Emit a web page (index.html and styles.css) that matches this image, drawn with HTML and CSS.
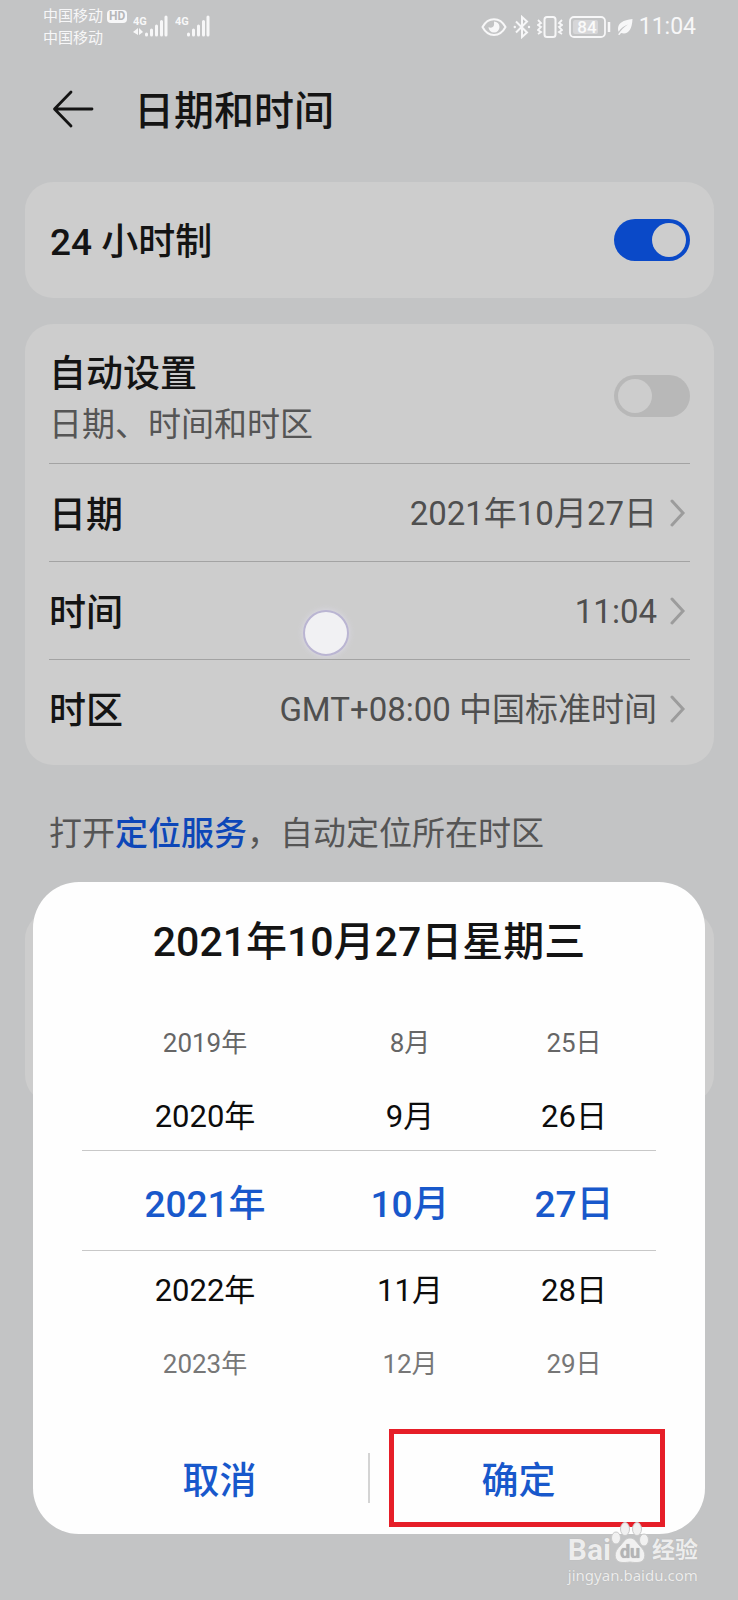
FILE: index.html
```html
<!DOCTYPE html>
<html lang="zh-CN">
<head>
<meta charset="utf-8">
<meta name="viewport" content="width=device-width, initial-scale=1">
<title>日期和时间</title>
<link rel="stylesheet" href="styles.css">
</head>
<body>
<div class="screen">
  <div class="status">
    <div class="status-left">
      <div class="carriers">
        <div class="carrier">中国移动 <span class="hd">HD</span></div>
        <div class="carrier">中国移动</div>
      </div>
      <svg class="signal" width="36" height="24" viewBox="0 0 36 24" aria-label="4G">
        <text x="0" y="11" class="net">4G</text>
        <path d="M0 18l5-4v7zM6 14l4 4-4 3z" fill="currentColor"/>
        <path d="M13.500 21v-1M18.500 21v-5M23.500 21v-9M28.500 21V7.500M33 21V3" class="bars"/>
      </svg>
      <svg class="signal" width="36" height="24" viewBox="0 0 36 24" aria-label="4G">
        <text x="0" y="11" class="net">4G</text>
        <path d="M13.500 21v-1M18.500 21v-5M23.500 21v-9M28.500 21V7.500M33 21V3" class="bars"/>
      </svg>
    </div>
    <div class="status-right">
      <svg width="26" height="24" viewBox="0 0 26 24" fill="none" stroke="currentColor" stroke-width="2">
        <path d="M1.500 12C7 1.500 19 1.500 24.500 12 19 22.500 7 22.500 1.500 12z"/>
        <path d="M13 6.500a5.500 5.500 0 1 1-5.500 5.500c2 1.500 5 .5 5.500-2 .2-1.500 0-2.500 0-3.500z" fill="currentColor" stroke="none"/>
      </svg>
      <svg width="18" height="24" viewBox="0 0 18 24" fill="none" stroke="currentColor" stroke-width="2">
        <path d="M3 6.500l11 11L9 22V2l5 4.500-11 11"/>
        <circle cx="1.800" cy="12" r="1.200" fill="currentColor" stroke="none"/>
        <circle cx="16" cy="12" r="1.200" fill="currentColor" stroke="none"/>
      </svg>
      <svg width="26" height="24" viewBox="0 0 26 24" fill="none" stroke="currentColor" stroke-width="2">
        <rect x="7.500" y="2" width="11" height="20" rx="2.500"/>
        <path d="M1 5l3 3-3 2 3 2-3 3 3 2-3 2M25 5l-3 3 3 2-3 2 3 3-3 2 3 2" stroke-width="1.800"/>
      </svg>
      <svg width="42" height="24" viewBox="0 0 42 24" aria-label="84%">
        <rect x="1" y="2" width="35" height="20" rx="4" fill="none" stroke="currentColor" stroke-width="1.800"/>
        <rect x="4" y="5" width="25" height="14" rx="2" fill="#d6d6d8"/>
        <path d="M40 7v10" stroke="currentColor" stroke-width="2.500"/>
        <text x="18" y="18" text-anchor="middle" class="level">84</text>
      </svg>
      <svg width="16" height="24" viewBox="0 0 16 24">
        <path d="M15.500 4C6 5 1 8 1 14c0 1 .3 2 .6 2.800C4 13 7 11 11 9.500 7 12 4 15 1 19.500l1.500.5 1.500-2c7 2 11-3 11.500-14z" fill="currentColor"/>
      </svg>
      <time class="clock">11:04</time>
    </div>
  </div>

  <header class="header">
    <button class="back" type="button" aria-label="返回">
      <svg width="44" height="40" viewBox="0 0 44 40" fill="none" stroke="currentColor" stroke-width="2.800" stroke-linecap="round" stroke-linejoin="round">
        <path d="M40 20H3M19 3L2.500 20 19 37"/>
      </svg>
    </button>
    <h1 class="title">日期和时间</h1>
  </header>

  <main class="content">
    <section class="card card-single">
      <label class="label" for="h24">24 小时制</label>
      <input class="switch" id="h24" type="checkbox" checked>
    </section>

    <section class="card card-list">
      <div class="row row-tall">
        <label for="auto">
          <span class="label">自动设置</span>
          <span class="hint">日期、时间和时区</span>
        </label>
        <input class="switch" id="auto" type="checkbox">
      </div>
      <button class="row" type="button">
        <span class="label">日期</span>
        <span class="value">2021年10月27日</span>
        <svg class="chevron" viewBox="0 0 16 28"><path d="M2 2l11 12L2 26"/></svg>
      </button>
      <button class="row" type="button">
        <span class="label">时间</span>
        <span class="value">11:04</span>
        <svg class="chevron" viewBox="0 0 16 28"><path d="M2 2l11 12L2 26"/></svg>
        <span class="touch"></span>
      </button>
      <button class="row" type="button">
        <span class="label">时区</span>
        <span class="value">GMT+08:00 中国标准时间</span>
        <svg class="chevron" viewBox="0 0 16 28"><path d="M2 2l11 12L2 26"/></svg>
      </button>
    </section>

    <p class="note">打开<a href="#location">定位服务</a>，自动定位所在时区</p>
    <section class="card card-empty"></section>
  </main>

  <div class="sheet" role="dialog" aria-labelledby="sheet-title">
    <h2 class="sheet-title" id="sheet-title">2021年10月27日星期三</h2>
    <div class="picker">
      <div class="picker-row far top"><span>2019年</span><span>8月</span><span>25日</span></div>
      <div class="picker-row near"><span>2020年</span><span>9月</span><span>26日</span></div>
      <div class="picker-row current"><span>2021年</span><span>10月</span><span>27日</span></div>
      <div class="picker-row near"><span>2022年</span><span>11月</span><span>28日</span></div>
      <div class="picker-row far bottom"><span>2023年</span><span>12月</span><span>29日</span></div>
    </div>
    <div class="actions">
      <button class="action" type="button">取消</button>
      <span class="separator"></span>
      <button class="action" type="button">确定<span class="highlight"></span></button>
    </div>
  </div>

  <div class="watermark">
    <div class="brand">
      <span class="brand-latin">Bai</span>
      <svg class="paw" width="38" height="44" viewBox="0 0 38 44">
        <g fill="#f1f1f1" stroke="#c9c9c9" stroke-width="1">
          <ellipse cx="5" cy="17" rx="4.500" ry="6"/>
          <ellipse cx="14" cy="8" rx="4.500" ry="6.500"/>
          <ellipse cx="26" cy="8" rx="4.500" ry="6.500"/>
          <ellipse cx="33" cy="19" rx="4.500" ry="6"/>
          <path d="M19 17c-5 0-7 5-10 8-4 4-6 8-4 13 2 4 7 4 14 3 7 1 12 1 14-3 2-5 0-9-4-13-3-3-5-8-10-8z"/>
        </g>
        <text x="19" y="37" text-anchor="middle" class="paw-text">du</text>
      </svg>
      <span class="brand-cn">经验</span>
    </div>
    <div class="site">jingyan.baidu.com</div>
  </div>
</div>
</body>
</html>
```
FILE: styles.css
```css
* {
  box-sizing: border-box;
}

body {
  margin: 0;
  background: #c3c4c5;
  color: #141414;
  font-family: Roboto, "Noto Sans CJK SC", sans-serif;
}

button {
  padding: 0;
  border: 0;
  background: none;
  color: inherit;
  font: inherit;
  text-align: left;
}

.screen {
  position: relative;
  min-height: 100vh;
  overflow: hidden;
}

.status {
  display: flex;
  justify-content: space-between;
  padding: 5px 42px 0 43px;
  color: #f7f7f8;
}

.status-left,
.status-right,
.carrier {
  display: flex;
  align-items: center;
}

.status-left {
  gap: 6px;
}

.status-right {
  gap: 6px;
  height: 44px;
}

.carrier {
  gap: 4px;
  height: 22px;
  font-size: 15px;
  line-height: 22px;
}

.hd {
  padding: 0 2px;
  border-radius: 4px;
  background: #f7f7f8;
  color: #b5b6b8;
  font-size: 12px;
  font-weight: 700;
  line-height: 13px;
}

.signal {
  margin-bottom: 2px;
}

.net {
  fill: currentColor;
  font-size: 11px;
  font-weight: 700;
}

.bars {
  fill: none;
  stroke: currentColor;
  stroke-width: 3;
  stroke-linecap: round;
}

.level {
  fill: #fafafa;
  font-size: 17px;
  font-weight: 500;
}

.clock {
  font-size: 23px;
  line-height: 44px;
}

.header {
  display: flex;
  align-items: center;
  gap: 38px;
  height: 120px;
  padding: 0 52px;
}

.back {
  display: flex;
}

.title {
  margin: 0;
  padding-top: 6px;
  font-size: 40px;
  font-weight: 500;
  line-height: 60px;
}

.content {
  padding: 13px 24px 0 25px;
}

.card {
  border-radius: 28px;
  background: #cdcdcd;
}

.card-single {
  display: flex;
  align-items: center;
  justify-content: space-between;
  height: 116px;
  margin-bottom: 26px;
  padding: 0 24px 0 25px;
}

.card-list {
  padding: 0 24px 8px;
}

.card-empty {
  height: 192px;
}

.label {
  display: block;
  padding-top: 6px;
  font-size: 37px;
  font-weight: 500;
  line-height: 52px;
}

.hint {
  display: block;
  color: #555;
  font-size: 33px;
  line-height: 48px;
}

.row {
  position: relative;
  display: flex;
  align-items: center;
  width: 100%;
  height: 98px;
  border-top: 1px solid #a3a3a3;
}

.row-tall {
  justify-content: space-between;
  height: 139px;
  padding-top: 4px;
  border-top: 0;
}

.value {
  margin-left: auto;
  padding-top: 2px;
  color: #4f4f4f;
  font-size: 33px;
  line-height: 48px;
}

.chevron {
  width: 16px;
  height: 28px;
  margin: 0 4px 0 13px;
  fill: none;
  stroke: #9c9c9c;
  stroke-width: 3;
  stroke-linecap: round;
}

.touch {
  position: absolute;
  top: 48px;
  left: 254px;
  width: 46px;
  height: 46px;
  border: 2px solid #bab5d2;
  border-radius: 50%;
  background: #f1f1f3;
  box-shadow: 0 0 6px #dcdae6;
}

.switch {
  position: relative;
  width: 76px;
  height: 42px;
  margin: 0;
  border-radius: 21px;
  background: #b8b8b8;
  appearance: none;
}

.switch::before {
  content: "";
  position: absolute;
  top: 4px;
  left: 4px;
  width: 34px;
  height: 34px;
  border-radius: 50%;
  background: #cdcdcd;
}

.switch:checked {
  background: #0a49c8;
}

.switch:checked::before {
  right: 4px;
  left: auto;
}

.note {
  margin: 0;
  padding: 43px 24px 51px;
  color: #555;
  font-size: 33px;
  line-height: 52px;
}

.note a {
  color: #0d47b8;
  font-weight: 500;
  text-decoration: none;
}

.sheet {
  position: absolute;
  right: 33px;
  bottom: 66px;
  left: 33px;
  padding: 30px 38px 7px;
  border-radius: 46px;
  background: #fefefe;
}

.sheet-title {
  margin: 0 0 31px;
  font-size: 41px;
  font-weight: 500;
  line-height: 60px;
  text-align: center;
}

.picker {
  padding: 0 11px;
}

.picker-row {
  display: grid;
  grid-template-columns: 3fr 2fr 2fr;
  align-items: center;
  height: 74px;
  text-align: center;
}

.far {
  color: #666;
  font-size: 26px;
}

.far.bottom {
  color: #777;
}

.near {
  height: 73px;
  color: #0c0c0c;
  font-size: 31px;
}

.current {
  height: 101px;
  border-top: 1px solid #c8c8c8;
  border-bottom: 1px solid #c8c8c8;
  color: #1858cb;
  font-size: 37px;
  font-weight: 500;
}

.actions {
  display: flex;
  align-items: center;
  height: 98px;
  margin-top: 31px;
}

.action {
  position: relative;
  flex: 1;
  height: 98px;
  color: #1858cb;
  font-size: 37px;
  font-weight: 500;
  text-align: center;
}

.separator {
  width: 2px;
  height: 50px;
  background: #d4d4d4;
}

.highlight {
  position: absolute;
  top: 0;
  right: 2px;
  bottom: 0;
  left: 19px;
  border: 5px solid #e61e28;
}

.watermark {
  position: absolute;
  right: 40px;
  bottom: 15px;
  color: #ededed;
  text-shadow: 0 0 1px #a8a8a8;
}

.brand {
  display: flex;
  align-items: flex-end;
}

.brand-latin {
  font-size: 30px;
  font-weight: 700;
  line-height: 30px;
}

.brand-cn {
  margin-left: 3px;
  font-size: 23px;
  font-weight: 700;
  line-height: 28px;
}

.paw-text {
  fill: #b4b4b6;
  font-size: 18px;
  font-weight: 700;
}

.site {
  font-family: "Noto Sans", sans-serif;
  font-size: 15px;
  line-height: 20px;
}
```
